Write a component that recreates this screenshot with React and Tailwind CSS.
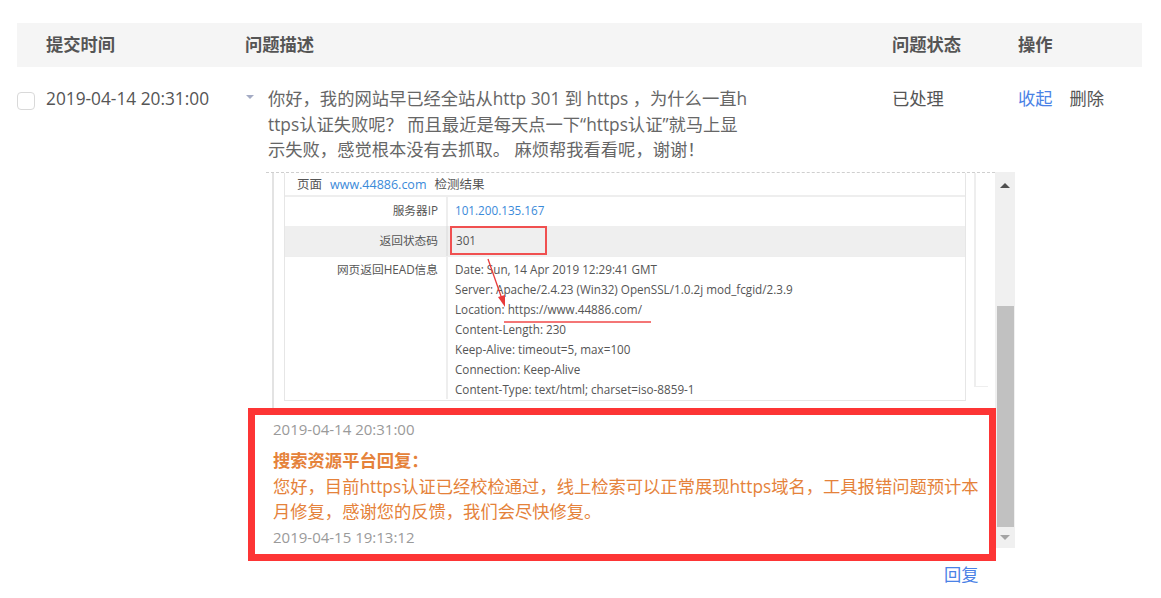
import React from 'react';

const font = { fontFamily: '"Open Sans", "Noto Sans CJK SC", sans-serif' };

// header line of the pasted screenshot
const headLines = [
  'Date: Sun, 14 Apr 2019 12:29:41 GMT',
  'Server: Apache/2.4.23 (Win32) OpenSSL/1.0.2j mod_fcgid/2.3.9',
  'Location: https://www.44886.com/',
  'Content-Length: 230',
  'Keep-Alive: timeout=5, max=100',
  'Connection: Keep-Alive',
  'Content-Type: text/html; charset=iso-8859-1',
];

const Shot = () => (
  <div className="relative flex h-[376px] w-[749px]">
    <div className="relative flex-1 border-t border-dashed border-[#cfcfcf]">
      <div className="flex h-full">
        <div className="ml-[6px] w-[2px] bg-[#e3e3e3]" />
        <div className="ml-[10px] flex w-[682px] flex-col">
          <div className="h-[228px] border border-t-0 border-[#e6e6e6] text-[11.7px] text-[#555]">
            <div className="flex h-[24px] items-center border-b-2 border-[#eeeeee] pl-[12px] pt-[3px] text-[12.5px]">
              <span>页面</span>
              <span className="ml-[8px] text-[#3b8ad9]">www.44886.com</span>
              <span className="ml-[8px]">检测结果</span>
            </div>
            <div className="flex h-[29px] items-center">
              <div className="w-[161px] pr-[8px] text-right">服务器IP</div>
              <div className="h-full w-[2px] bg-[#eeeeee]" />
              <div className="pl-[7px] text-[#3b8ad9]">101.200.135.167</div>
            </div>
            <div className="flex h-[30px] items-center bg-[#efefef]">
              <div className="w-[161px] pr-[8px] text-right">返回状态码</div>
              <div className="h-full w-[2px] bg-[#e4e4e4]" />
              <div className="ml-[2px] flex h-[29px] w-[97px] items-center border-2 border-[#f05050] pl-[4px]">301</div>
            </div>
            <div className="flex h-[143px] border-t border-[#eeeeee]">
              <div className="w-[161px] pr-[8px] pt-[2px] text-right leading-[20px]">网页返回HEAD信息</div>
              <div className="h-full w-[2px] bg-[#eeeeee]" />
              <div className="pl-[7px] pt-[2px] leading-[20px]">
                {headLines.map((l) => (
                  <div key={l}>{l}</div>
                ))}
              </div>
            </div>
          </div>
        </div>
        <div className="ml-[8px] flex h-[214px] w-[14px] border-b border-l-2 border-[#eeeeee]" />
      </div>
      {/* arrow + underline annotation */}
      <svg className="absolute left-0 top-0" width="729" height="240">
        <line x1="222" y1="86" x2="236" y2="126" stroke="#e83a3a" strokeWidth="1.3" />
        <polygon points="239,134 232,124 239,122" fill="#e83a3a" />
        <line x1="238" y1="149" x2="385" y2="149" stroke="#f04848" strokeWidth="1.5" />
      </svg>
    </div>
    <div className="flex w-[20px] flex-col bg-[#f0f0f0]">
      <div className="flex h-[20px] items-end justify-center pb-[4px]">
        <div className="h-0 w-0 border-x-[5px] border-b-[5px] border-x-transparent border-b-[#505050]" />
      </div>
      <div className="mt-[114px] ml-[2px] h-[221px] w-[17px] bg-[#c1c1c1]" />
      <div className="flex flex-1 items-center justify-center">
        <div className="h-0 w-0 border-x-[5px] border-t-[5px] border-x-transparent border-t-[#a3a3a3]" />
      </div>
    </div>
  </div>
);

export default function App() {
  return (
    <div className="h-[598px] w-[1161px] overflow-hidden bg-white" style={font}>
      <div className="ml-[17px] mt-[23px] w-[1125px]">
        {/* header */}
        <div className="flex h-[44px] items-center bg-[#f5f5f5] text-[17.3px] font-bold text-[#555]">
          <div className="w-[29px]" />
          <div className="w-[199px]">提交时间</div>
          <div className="w-[647px]">问题描述</div>
          <div className="w-[126px]">问题状态</div>
          <div>操作</div>
        </div>

        {/* row */}
        <div className="flex pt-[19px] text-[17.3px] text-[#555]">
          <div className="w-[29px] pt-[6px]">
            <div className="h-[18px] w-[18px] rounded-[4px] border border-[#d9d9d9]" />
          </div>
          <div className="w-[199px] leading-[25.5px]">2019-04-14 20:31:00</div>
          <div className="w-[647px]">
            <div className="flex">
              <div className="w-[23px] pl-[1px] pt-[9px]">
                <div className="h-0 w-0 border-x-[4px] border-t-[4px] border-x-transparent border-t-[#a4abc4]" />
              </div>
              <div className="whitespace-nowrap leading-[25.5px] text-[#666]">
                <div>你好，我的网站早已经全站从http 301 到 https ，为什么一直h</div>
                <div>ttps认证失败呢？ 而且最近是每天点一下“https认证”就马上显</div>
                <div>示失败，感觉根本没有去抓取。 麻烦帮我看看呢，谢谢！</div>
              </div>
            </div>
            <div className="relative mt-[9px] ml-[21px]">
              <Shot />
              {/* reply content laid over the pasted picture */}
              <div className="absolute left-[-18px] top-[236px] h-[153px] w-[748px] border-[7px] border-[#fd3535] bg-white pl-[18px] pt-[4px]">
                <div className="text-[15px] leading-[20px] text-[#9a9a9a]">2019-04-14 20:31:00</div>
                <div className="mt-[11px] font-bold leading-[22px] text-[#e5823a]">搜索资源平台回复：</div>
                <div className="mt-[2px] whitespace-nowrap leading-[25.5px] text-[#e5823a]">
                  <div>您好，目前https认证已经校检通过，线上检索可以正常展现https域名，工具报错问题预计本</div>
                  <div>月修复，感谢您的反馈，我们会尽快修复。</div>
                </div>
                <div className="mt-[2px] text-[15px] leading-[20px] text-[#9a9a9a]">2019-04-15 19:13:12</div>
              </div>
            </div>
            <div className="mt-[14px] ml-[699px] whitespace-nowrap text-[#4a82e6]">回复</div>
          </div>
          <div className="w-[126px] leading-[25.5px]">已处理</div>
          <div className="flex gap-[17px] leading-[25.5px]">
            <span className="text-[#4a82e6]">收起</span>
            <span>删除</span>
          </div>
        </div>
      </div>
    </div>
  );
}
